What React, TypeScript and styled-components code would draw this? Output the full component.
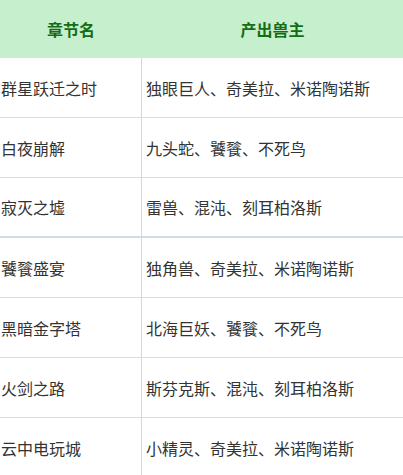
import React from 'react';
import styled, { createGlobalStyle } from 'styled-components';

const ROWS = [
  { name: '群星跃迁之时', boss: '独眼巨人、奇美拉、米诺陶诺斯' },
  { name: '白夜崩解', boss: '九头蛇、饕餮、不死鸟' },
  { name: '寂灭之墟', boss: '雷兽、混沌、刻耳柏洛斯', thick: true },
  { name: '饕餮盛宴', boss: '独角兽、奇美拉、米诺陶诺斯' },
  { name: '黑暗金字塔', boss: '北海巨妖、饕餮、不死鸟' },
  { name: '火剑之路', boss: '斯芬克斯、混沌、刻耳柏洛斯' },
  { name: '云中电玩城', boss: '小精灵、奇美拉、米诺陶诺斯' },
];

const GlobalStyle = createGlobalStyle`
  html, body {
    margin: 0;
    padding: 0;
    background: #ffffff;
  }
  body {
    font-family: "Noto Sans CJK SC", sans-serif;
  }
`;

const Table = styled.div`
  width: 403px;
  display: grid;
  grid-template-columns: 142px 1fr;
`;

const HeadCell = styled.div`
  height: 58px;
  background: #c6efce;
  display: flex;
  align-items: center;
  justify-content: center;
  font-size: 16px;
  font-weight: 700;
  color: #146c14;
`;

const Cell = styled.div<{ first?: boolean; thick?: boolean }>`
  height: ${(p) => (p.thick ? '58px' : '59px')};
  display: flex;
  align-items: center;
  padding-left: ${(p) => (p.first ? '1px' : '4px')};
  font-size: 16px;
  color: #333333;
  border-bottom: ${(p) => (p.thick ? '2px solid #d3d9e6' : '1px solid #dcdcdc')};
  border-right: ${(p) => (p.first ? '1px solid #d6d6d6' : 'none')};
  white-space: nowrap;
`;

export default function App() {
  return (
    <>
      <GlobalStyle />
      <Table>
        <HeadCell>章节名</HeadCell>
        <HeadCell>产出兽主</HeadCell>
        {ROWS.map((r) => (
          <React.Fragment key={r.name}>
            <Cell first thick={r.thick}>{r.name}</Cell>
            <Cell thick={r.thick}>{r.boss}</Cell>
          </React.Fragment>
        ))}
      </Table>
    </>
  );
}
